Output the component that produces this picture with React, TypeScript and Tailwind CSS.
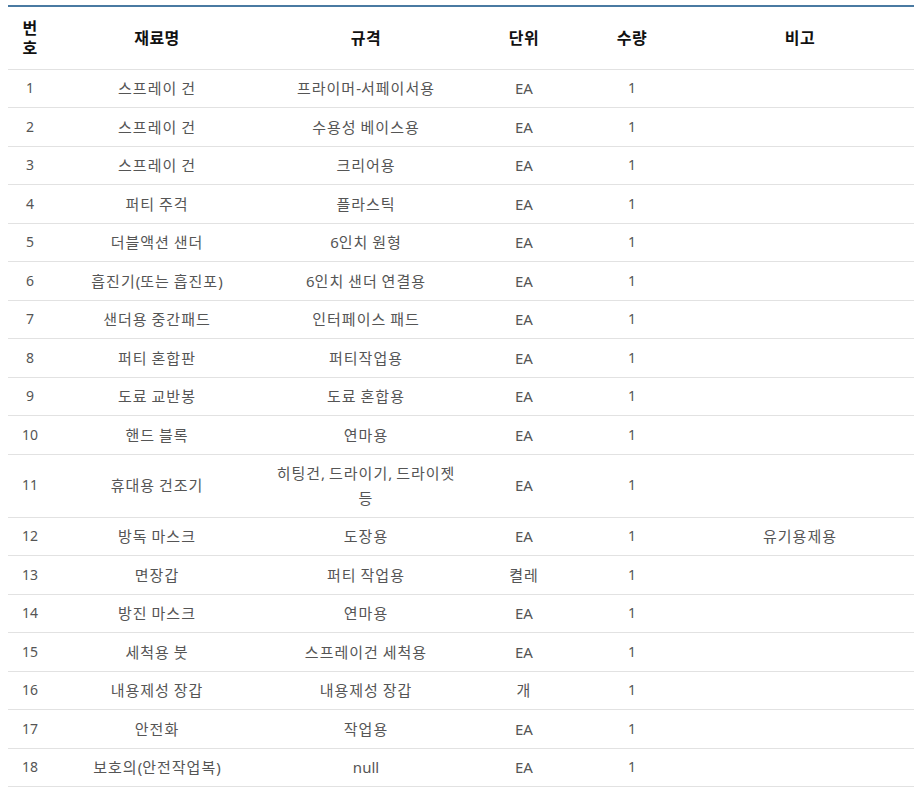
import React from "react";

type Row = { no: number; name: string; spec: string; unit: string; qty: string; note?: string };

const rows: Row[] = [
  { no: 1, name: "스프레이 건", spec: "프라이머-서페이서용", unit: "EA", qty: "1" },
  { no: 2, name: "스프레이 건", spec: "수용성 베이스용", unit: "EA", qty: "1" },
  { no: 3, name: "스프레이 건", spec: "크리어용", unit: "EA", qty: "1" },
  { no: 4, name: "퍼티 주걱", spec: "플라스틱", unit: "EA", qty: "1" },
  { no: 5, name: "더블액션 샌더", spec: "6인치 원형", unit: "EA", qty: "1" },
  { no: 6, name: "흡진기(또는 흡진포)", spec: "6인치 샌더 연결용", unit: "EA", qty: "1" },
  { no: 7, name: "샌더용 중간패드", spec: "인터페이스 패드", unit: "EA", qty: "1" },
  { no: 8, name: "퍼티 혼합판", spec: "퍼티작업용", unit: "EA", qty: "1" },
  { no: 9, name: "도료 교반봉", spec: "도료 혼합용", unit: "EA", qty: "1" },
  { no: 10, name: "핸드 블록", spec: "연마용", unit: "EA", qty: "1" },
  { no: 11, name: "휴대용 건조기", spec: "히팅건, 드라이기, 드라이젯\n등", unit: "EA", qty: "1" },
  { no: 12, name: "방독 마스크", spec: "도장용", unit: "EA", qty: "1", note: "유기용제용" },
  { no: 13, name: "면장갑", spec: "퍼티 작업용", unit: "켤레", qty: "1" },
  { no: 14, name: "방진 마스크", spec: "연마용", unit: "EA", qty: "1" },
  { no: 15, name: "세척용 붓", spec: "스프레이건 세척용", unit: "EA", qty: "1" },
  { no: 16, name: "내용제성 장갑", spec: "내용제성 장갑", unit: "개", qty: "1" },
  { no: 17, name: "안전화", spec: "작업용", unit: "EA", qty: "1" },
  { no: 18, name: "보호의(안전작업복)", spec: "null", unit: "EA", qty: "1" },
];

function K({ text }: { text: string }) {
  const lines = text.split("\n");
  return (
    <>
      {lines.map((line, li) => {
        const parts = line.split(/([\uAC00-\uD7A3]+)/);
        return (
          <React.Fragment key={li}>
            {li > 0 && <br />}
            {parts.map((p, i) =>
              /[\uAC00-\uD7A3]/.test(p) ? (
                <span key={i} className="tracking-[1px]">
                  {p}
                </span>
              ) : (
                <span key={i}>{p}</span>
              )
            )}
          </React.Fragment>
        );
      })}
    </>
  );
}

export default function App() {
  const font = { fontFamily: '"Noto Sans", "Noto Sans CJK KR", sans-serif' };
  return (
    <div className="w-[919px] min-h-[790px] bg-white pt-[5px] pl-[8px] pr-[5px]" style={font}>
      <table className="w-[906px] border-collapse table-fixed border-t-2 border-[#4a7aa2]">
        <colgroup>
          <col className="w-[44px]" />
          <col className="w-[210px]" />
          <col className="w-[208px]" />
          <col className="w-[108px]" />
          <col className="w-[108px]" />
          <col className="w-[228px]" />
        </colgroup>
        <thead>
          <tr className="border-b border-[#e2e2e2] text-[16px] font-bold text-[#111] leading-[20px] tracking-[0.5px]">
            <th className="h-[63px] px-0 text-center align-middle">
              번<br />호
            </th>
            <th className="text-center align-middle">재료명</th>
            <th className="text-center align-middle">규격</th>
            <th className="text-center align-middle">단위</th>
            <th className="text-center align-middle">수량</th>
            <th className="text-center align-middle">비고</th>
          </tr>
        </thead>
        <tbody className="text-[14px] text-[#555] leading-[24.5px]">
          {rows.map((r) => (
            <tr key={r.no} className="border-b border-[#e2e2e2]">
              <td className="py-[6.5px] text-center">{r.no}</td>
              <td className="py-[6.5px] text-center text-[15px]">
                <K text={r.name} />
              </td>
              <td className="py-[6.5px] text-center text-[15px]">
                <K text={r.spec} />
              </td>
              <td className="py-[6.5px] text-center text-[15px]">
                <K text={r.unit} />
              </td>
              <td className="py-[6.5px] text-center">{r.qty}</td>
              <td className="py-[6.5px] text-center text-[15px]">
                <K text={r.note ?? ""} />
              </td>
            </tr>
          ))}
        </tbody>
      </table>
    </div>
  );
}
